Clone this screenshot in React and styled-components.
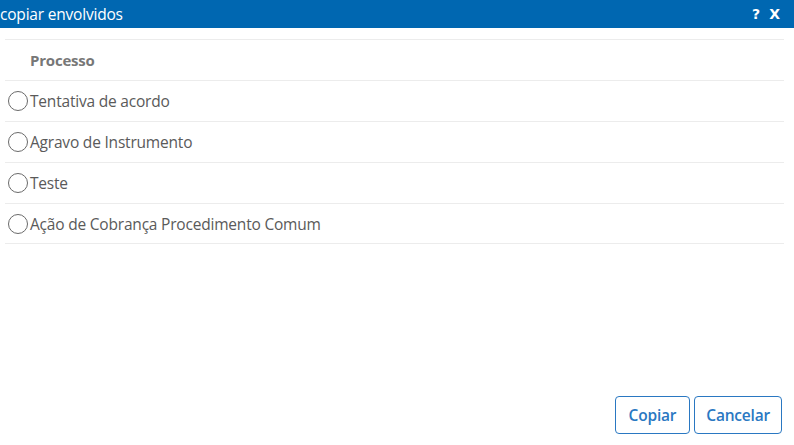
import React from "react";
import styled, { createGlobalStyle } from "styled-components";

const Global = createGlobalStyle`
  html, body { margin: 0; padding: 0; background: #fff; }
  body { font-family: "Open Sans", "Noto Sans", sans-serif; }
  * { box-sizing: border-box; }
`;

const Dialog = styled.div`
  width: 794px;
  height: 445px;
  display: flex;
  flex-direction: column;
  background: #fff;
`;

const TitleBar = styled.div`
  height: 28px;
  background: #0067b1;
  color: #fff;
  display: flex;
  align-items: center;
  justify-content: space-between;
  padding: 0 14px 0 0;
`;

const Title = styled.span`
  font-size: 15.5px;
  letter-spacing: -0.2px;
`;

const TitleActions = styled.div`
  display: flex;
  gap: 9px;
  font-family: "DejaVu Sans", sans-serif;
  font-weight: bold;
  font-size: 14px;
`;

const Body = styled.div`
  flex: 1;
  padding: 11px 10px 0 5px;
`;

const Row = styled.div`
  height: 41px;
  border-top: 1px solid #ececec;
  display: flex;
  align-items: center;
  padding-left: ${p => (p.$head ? "25px" : "3px")};
  color: ${p => (p.$head ? "#777" : "#5a5a5a")};
  font-weight: ${p => (p.$head ? 700 : 400)};
  font-size: ${p => (p.$head ? "15px" : "15.5px")};
  letter-spacing: -0.2px;
  &:last-child { border-bottom: 1px solid #ececec; }
`;

const Radio = styled.span`
  width: 20px;
  height: 20px;
  border: 1.5px solid #6a6a6a;
  border-radius: 50%;
  flex: none;
  margin-right: 2px;
`;

const Footer = styled.div`
  display: flex;
  justify-content: flex-end;
  gap: 4px;
  padding: 0 12px 11px 0;
`;

const Button = styled.button`
  height: 38px;
  padding: 0 ${p => p.$px}px;
  background: #fff;
  border: 1px solid #2a78c2;
  border-radius: 4px;
  color: #2a78c2;
  font-family: "Open Sans", sans-serif;
  font-weight: 600;
  font-size: 15.5px;
  letter-spacing: -0.2px;
`;

const items = [
  "Tentativa de acordo",
  "Agravo de Instrumento",
  "Teste",
  "Ação de Cobrança Procedimento Comum",
];

export default function App() {
  return (
    <>
      <Global />
      <Dialog>
        <TitleBar>
          <Title>copiar envolvidos</Title>
          <TitleActions>
            <span>?</span>
            <span>X</span>
          </TitleActions>
        </TitleBar>
        <Body>
          <Row $head>Processo</Row>
          {items.map(t => (
            <Row key={t}>
              <Radio />
              {t}
            </Row>
          ))}
        </Body>
        <Footer>
          <Button $px={13}>Copiar</Button>
          <Button $px={11}>Cancelar</Button>
        </Footer>
      </Dialog>
    </>
  );
}
